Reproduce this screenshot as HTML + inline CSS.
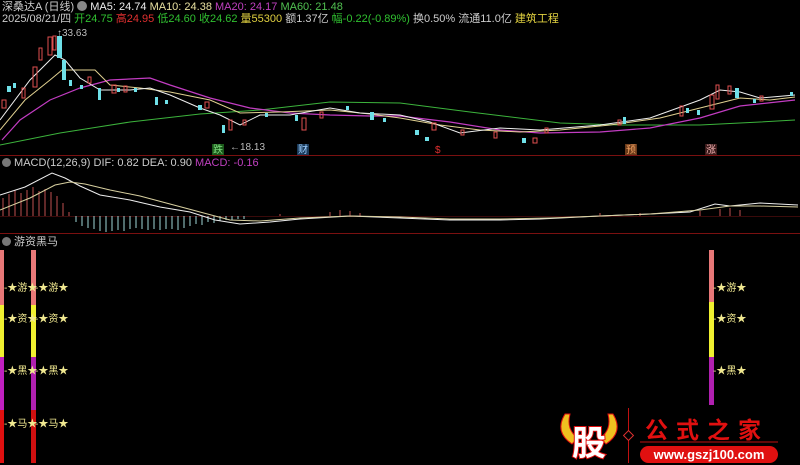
<!DOCTYPE html>
<html><head><meta charset="utf-8"><style>
html,body{margin:0;padding:0;background:#000;width:800px;height:465px;overflow:hidden;font-family:"Liberation Sans","Noto Sans CJK SC",sans-serif}
.t{position:absolute;font-size:11px;white-space:nowrap;line-height:12px}
</style></head><body>
<svg width="800" height="465" style="position:absolute;left:0;top:0" font-family="Liberation Sans, Noto Sans CJK SC, sans-serif">
<line x1="0" y1="155.5" x2="800" y2="155.5" stroke="#7a1010"/>
<line x1="0" y1="233.5" x2="800" y2="233.5" stroke="#7a1010"/>
<line x1="0" y1="216.5" x2="800" y2="216.5" stroke="#3a0a0a"/>
<polyline fill="none" stroke="#3cb33c" stroke-width="1" points="0,145 60,133 130,122 200,114 260,110 330,102 400,103 470,112 560,123 620,125 700,125 760,122 795,120"/>
<polyline fill="none" stroke="#c23cc2" stroke-width="1.2" points="2,140 20,120 50,100 80,88 110,80 150,78 170,85 210,98 250,108 290,113 330,115 370,116 400,116 450,122 500,130 540,133 600,132 650,128 700,118 740,106 795,100"/>
<polyline fill="none" stroke="#e0d090" stroke-width="1" points="0,130 25,100 50,80 62,70 80,70 95,70 110,85 140,88 170,92 210,100 240,113 280,112 330,110 370,114 400,118 440,125 480,130 520,132 560,130 610,125 660,118 700,108 740,98 770,100 795,97"/>
<polyline fill="none" stroke="#eeeeee" stroke-width="1" points="0,120 30,80 55,55 65,60 80,78 100,90 130,90 150,88 170,95 200,108 220,115 240,125 260,115 290,115 330,108 360,113 400,115 430,122 460,133 500,128 540,130 600,125 650,118 700,100 720,90 740,92 760,98 795,95"/>
<g stroke="#e05050" fill="none" stroke-width="1">
<rect x="2" y="100" width="4" height="8"/><rect x="22" y="88" width="3" height="10"/><rect x="33" y="67" width="4" height="20"/><rect x="39" y="48" width="3" height="12"/><rect x="48" y="37" width="4" height="18"/><rect x="53" y="36" width="3" height="14"/><rect x="88" y="77" width="3" height="6"/><rect x="112" y="85" width="4" height="8"/><rect x="124" y="86" width="3" height="6"/><rect x="205" y="102" width="4" height="6"/><rect x="229" y="120" width="3" height="10"/><rect x="243" y="120" width="3" height="5"/><rect x="302" y="118" width="4" height="12"/><rect x="320" y="112" width="3" height="6"/><rect x="432" y="123" width="4" height="7"/><rect x="461" y="130" width="3" height="5"/><rect x="494" y="132" width="3" height="6"/><rect x="533" y="138" width="4" height="5"/><rect x="545" y="128" width="3" height="5"/><rect x="618" y="120" width="3" height="5"/><rect x="680" y="106" width="3" height="10"/><rect x="710" y="95" width="4" height="14"/><rect x="716" y="85" width="3" height="14"/><rect x="728" y="86" width="3" height="8"/><rect x="760" y="96" width="3" height="5"/>
</g>
<g fill="#6fe0e8">
<rect x="7" y="86" width="4" height="6"/><rect x="13" y="83" width="3" height="5"/><rect x="57" y="36" width="5" height="22"/><rect x="62" y="60" width="4" height="20"/><rect x="69" y="80" width="3" height="6"/><rect x="80" y="85" width="3" height="4"/><rect x="98" y="88" width="3" height="12"/><rect x="117" y="88" width="3" height="4"/><rect x="134" y="88" width="3" height="4"/><rect x="155" y="97" width="3" height="8"/><rect x="165" y="100" width="3" height="4"/><rect x="198" y="105" width="4" height="5"/><rect x="222" y="125" width="3" height="8"/><rect x="265" y="113" width="3" height="4"/><rect x="295" y="115" width="3" height="6"/><rect x="346" y="106" width="3" height="4"/><rect x="370" y="112" width="4" height="8"/><rect x="383" y="118" width="3" height="4"/><rect x="415" y="130" width="4" height="5"/><rect x="425" y="137" width="4" height="4"/><rect x="522" y="138" width="4" height="5"/><rect x="623" y="117" width="3" height="7"/><rect x="686" y="108" width="3" height="5"/><rect x="697" y="110" width="3" height="5"/><rect x="735" y="88" width="4" height="10"/><rect x="753" y="99" width="3" height="4"/><rect x="790" y="92" width="3" height="4"/>
</g>
<text x="57" y="36" fill="#bbb" font-size="10">↑33.63</text>
<text x="230" y="150" fill="#bbb" font-size="10">←18.13</text>
<rect x="212" y="144" width="12" height="11" fill="#1a5a1a"/><text x="213" y="153" fill="#7fdc7f" font-size="10">跌</text>
<rect x="297" y="144" width="12" height="11" fill="#1a3a5a"/><text x="298" y="153" fill="#9fd0ff" font-size="10">财</text>
<text x="435" y="153" fill="#e03030" font-size="10">$</text>
<rect x="625" y="144" width="12" height="11" fill="#6a3a1a"/><text x="626" y="153" fill="#f0a060" font-size="10">预</text>
<rect x="705" y="144" width="12" height="11" fill="#3a1a1a"/><text x="706" y="153" fill="#f0b0b0" font-size="10">涨</text>
<g stroke="#c05050" stroke-width="1">
<line x1="3" y1="216" x2="3" y2="198"/><line x1="9" y1="216" x2="9" y2="194"/><line x1="15" y1="216" x2="15" y2="190"/><line x1="21" y1="216" x2="21" y2="193"/><line x1="27" y1="216" x2="27" y2="190"/><line x1="33" y1="216" x2="33" y2="187"/><line x1="39" y1="216" x2="39" y2="191"/><line x1="45" y1="216" x2="45" y2="189"/><line x1="51" y1="216" x2="51" y2="192"/><line x1="57" y1="216" x2="57" y2="196"/><line x1="63" y1="216" x2="63" y2="203"/><line x1="69" y1="216" x2="69" y2="212"/>
<line x1="280" y1="216" x2="280" y2="214"/><line x1="330" y1="216" x2="330" y2="212"/><line x1="340" y1="216" x2="340" y2="210"/><line x1="350" y1="216" x2="350" y2="211"/><line x1="360" y1="216" x2="360" y2="213"/><line x1="600" y1="216" x2="600" y2="213"/><line x1="640" y1="216" x2="640" y2="213"/><line x1="700" y1="216" x2="700" y2="211"/><line x1="720" y1="216" x2="720" y2="209"/><line x1="730" y1="216" x2="730" y2="208"/><line x1="740" y1="216" x2="740" y2="210"/>
</g>
<g stroke="#a0d8d8" stroke-width="1">
<line x1="76" y1="216" x2="76" y2="222"/><line x1="82" y1="216" x2="82" y2="226"/><line x1="88" y1="216" x2="88" y2="228"/><line x1="94" y1="216" x2="94" y2="229"/><line x1="100" y1="216" x2="100" y2="231"/><line x1="106" y1="216" x2="106" y2="232"/><line x1="112" y1="216" x2="112" y2="231"/><line x1="118" y1="216" x2="118" y2="230"/><line x1="124" y1="216" x2="124" y2="231"/><line x1="130" y1="216" x2="130" y2="229"/><line x1="136" y1="216" x2="136" y2="228"/><line x1="142" y1="216" x2="142" y2="229"/><line x1="148" y1="216" x2="148" y2="230"/><line x1="154" y1="216" x2="154" y2="229"/><line x1="160" y1="216" x2="160" y2="230"/><line x1="166" y1="216" x2="166" y2="229"/><line x1="172" y1="216" x2="172" y2="229"/><line x1="178" y1="216" x2="178" y2="230"/><line x1="184" y1="216" x2="184" y2="228"/><line x1="190" y1="216" x2="190" y2="226"/><line x1="196" y1="216" x2="196" y2="224"/><line x1="202" y1="216" x2="202" y2="225"/><line x1="208" y1="216" x2="208" y2="222"/><line x1="214" y1="216" x2="214" y2="223"/><line x1="220" y1="216" x2="220" y2="221"/><line x1="226" y1="216" x2="226" y2="220"/><line x1="232" y1="216" x2="232" y2="220"/><line x1="238" y1="216" x2="238" y2="219"/><line x1="244" y1="216" x2="244" y2="219"/>
</g>
<polyline fill="none" stroke="#eee" stroke-width="1" points="0,195 25,187 52,173 65,178 80,186 100,195 130,200 160,207 190,212 215,220 240,224 270,222 300,219 350,216 400,218 450,220 500,220 540,219 600,216 650,214 690,212 715,204 730,206 760,203 798,205"/>
<polyline fill="none" stroke="#d8d0a0" stroke-width="1" points="0,210 30,198 55,185 70,182 85,184 110,190 140,196 170,204 200,212 230,220 260,221 300,218 350,216 400,217 450,219 500,219 550,218 600,216 650,214 700,210 730,206 760,206 798,207"/>
<rect x="0" y="250" width="4" height="55" fill="#e87878"/><rect x="0" y="305" width="4" height="52" fill="#f0f030"/><rect x="0" y="357" width="4" height="53" fill="#c020c0"/><rect x="0" y="410" width="4" height="53" fill="#e01010"/>
<rect x="31" y="250" width="5" height="55" fill="#e87878"/><rect x="31" y="305" width="5" height="52" fill="#f0f030"/><rect x="31" y="357" width="5" height="53" fill="#b020b0"/><rect x="31" y="410" width="5" height="53" fill="#d01010"/>
<rect x="709" y="250" width="5" height="52" fill="#e87878"/><rect x="709" y="302" width="5" height="55" fill="#f0f030"/><rect x="709" y="357" width="5" height="48" fill="#b020b0"/>
<g fill="#f0e890" font-size="10">
<text x="4" y="291">-★游★</text><text x="4" y="322">-★资★</text><text x="4" y="374">-★黑★</text><text x="4" y="427">-★马★</text>
<text x="35" y="291">-★游★</text><text x="35" y="322">-★资★</text><text x="35" y="374">-★黑★</text><text x="35" y="427">-★马★</text>
<text x="713" y="291">-★游★</text><text x="713" y="322">-★资★</text><text x="713" y="374">-★黑★</text>
</g>
<path d="M565,414 Q554,432 572,444 L578,438 Q566,430 570,414Z" fill="#f0c020" stroke="#e01010"/>
<path d="M613,414 Q624,432 606,444 L600,438 Q612,430 608,414Z" fill="#f0c020" stroke="#e01010"/>
<text x="572" y="455" font-size="34" font-weight="bold" fill="#fff" stroke="#e01010" stroke-width="2" paint-order="stroke">股</text>
<line x1="628.5" y1="408" x2="628.5" y2="463" stroke="#c01010"/>
<rect x="625" y="432" width="7" height="7" transform="rotate(45 628.5 435.5)" fill="#000" stroke="#e03030"/>
<text x="645" y="438" font-size="23" fill="#e01010" letter-spacing="8" font-weight="bold">公式之家</text>
<line x1="640" y1="442" x2="778" y2="442" stroke="#c01010"/>
<rect x="640" y="446" width="138" height="17" rx="8.5" fill="#e01010"/>
<text x="709" y="459" font-size="13" font-weight="bold" fill="#fff" text-anchor="middle">www.gszj100.com</text>
</svg>
<div class="t" style="left:2px;top:1px;color:#ccc">深桑达A (日线) <span style="display:inline-block;width:10px;height:10px;border-radius:5px;background:#888;vertical-align:-1px"></span> <span style="color:#eee">MA5: 24.74</span> <span style="color:#e8e0a0">MA10: 24.38</span> <span style="color:#c040c0">MA20: 24.17</span> <span style="color:#50c050">MA60: 21.48</span></div>
<div class="t" style="left:2px;top:13px;color:#ccc">2025/08/21/四 <span style="color:#30c030">开24.75</span> <span style="color:#e03030">高24.95</span> <span style="color:#30c030">低24.60</span> <span style="color:#30c030">收24.62</span> <span style="color:#e0d040">量55300</span> 额1.37亿 <span style="color:#30c030">幅-0.22(-0.89%)</span> 换0.50% 流通11.0亿 <span style="color:#e0d040">建筑工程</span></div>
<div class="t" style="left:2px;top:157px;color:#ccc"><span style="display:inline-block;width:9px;height:9px;border-radius:5px;background:#777;vertical-align:-1px"></span> MACD(12,26,9) DIF: 0.82 DEA: 0.90 <span style="color:#c040c0">MACD: -0.16</span></div>
<div class="t" style="left:2px;top:236px;color:#ccc"><span style="display:inline-block;width:9px;height:9px;border-radius:5px;background:#777;vertical-align:-1px"></span> 游资黑马</div>
</body></html>
